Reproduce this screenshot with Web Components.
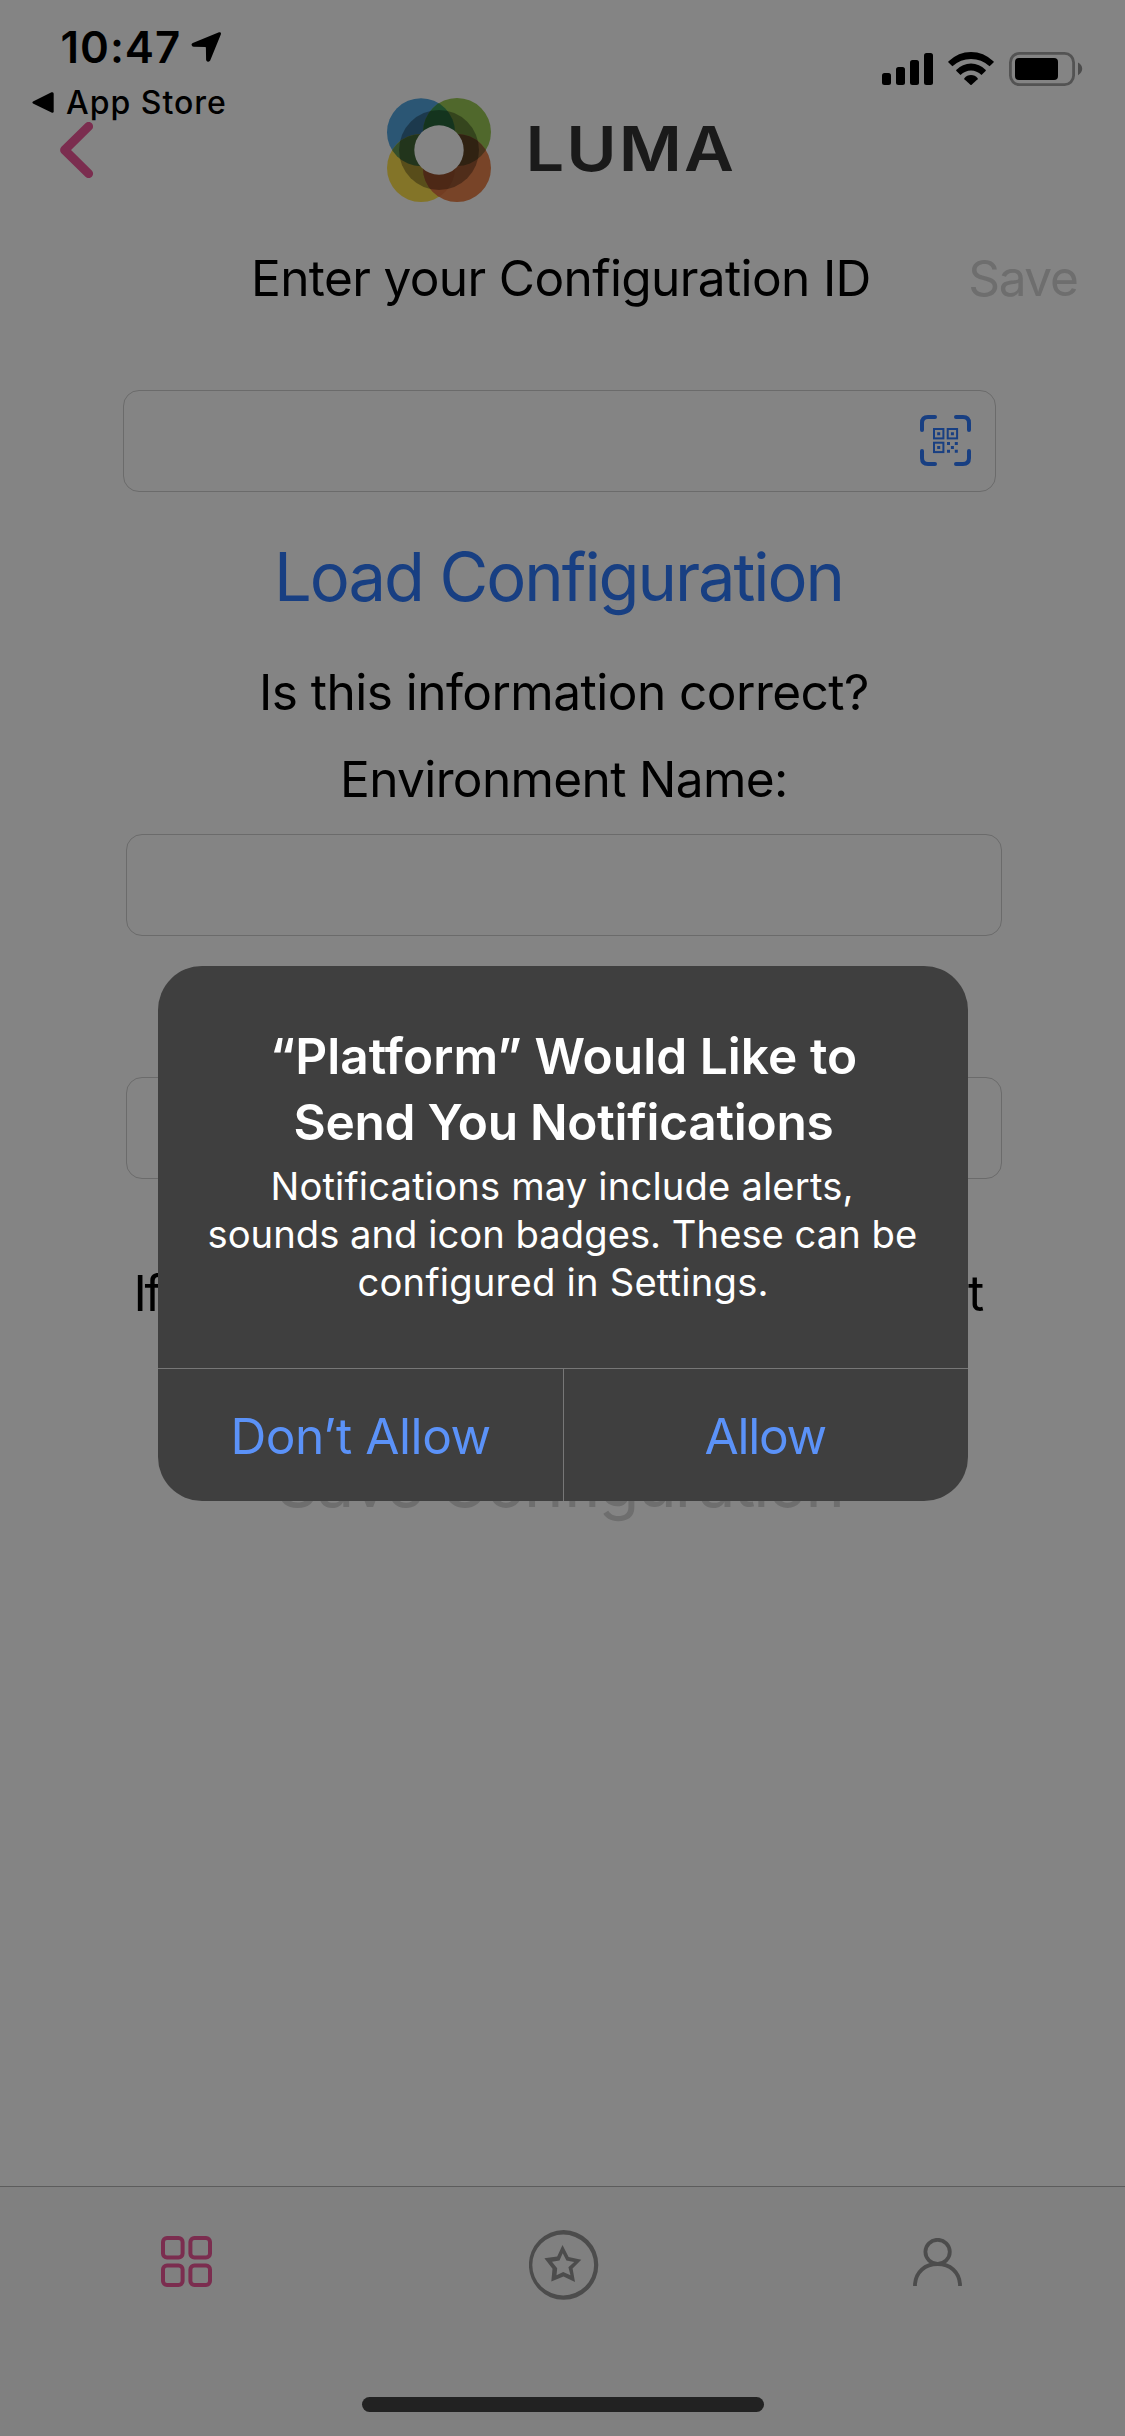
<!DOCTYPE html>
<html lang="en">
<head>
<meta charset="utf-8">
<title>Platform</title>
<style>
html,body{margin:0;background:#848484}
body{font-family:Inter,"Liberation Sans",sans-serif;color:#000}
</style>
</head>
<body>
<luma-app></luma-app>
<script>
const define = (name, html, ready) => {
  const t = document.createElement('template');
  t.innerHTML = html;
  customElements.define(name, class extends HTMLElement {
    constructor() { super(); this.attachShadow({mode: 'open'}).append(t.content.cloneNode(true)); }
    connectedCallback() { if (ready) ready.call(this); }
  });
};

/* A single line of text tracked so that its ink spans the width in the "w" attribute. */
const ctx = document.createElement('canvas').getContext('2d');
define('track-text', `<style>
  :host{display:block;white-space:nowrap;flex:none}
</style><slot></slot>`, function () {
  const size = +this.getAttribute('size'), w = +this.getAttribute('w');
  const weight = this.getAttribute('weight') || 400, text = this.textContent;
  ctx.font = `${weight} ${size}px Inter, "Liberation Sans", sans-serif`;
  const m = ctx.measureText(text);
  const ink = m.actualBoundingBoxLeft + m.actualBoundingBoxRight;
  const s = this.style;
  s.fontSize = size + 'px';
  s.fontWeight = weight;
  s.lineHeight = this.getAttribute('line') + 'px';
  s.width = w + 'px';
  s.textIndent = m.actualBoundingBoxLeft + 'px';
  if (text.length > 1) s.letterSpacing = (w - ink) / (text.length - 1) + 'px';
});

define('luma-mark', `<style>:host{display:block;flex:none}svg{display:block}</style>
<svg width="104" height="104" viewBox="387 98 104 104">
  <defs>
    <clipPath id="b"><circle cx="421" cy="132.2" r="34"/></clipPath>
    <clipPath id="y"><circle cx="421" cy="168" r="34"/></clipPath>
    <clipPath id="g"><circle cx="457" cy="132" r="34"/></clipPath>
  </defs>
  <circle cx="421" cy="132.2" r="34" fill="#2b5674"/>
  <circle cx="457" cy="132" r="34" fill="#50682c"/>
  <circle cx="421" cy="168" r="34" fill="#837428"/>
  <circle cx="457" cy="168" r="34" fill="#784428"/>
  <circle cx="457" cy="132" r="34" fill="#1f4e2e" clip-path="url(#b)"/>
  <circle cx="421" cy="168" r="34" fill="#344f2b" clip-path="url(#b)"/>
  <circle cx="457" cy="168" r="34" fill="#48331c" clip-path="url(#g)"/>
  <circle cx="457" cy="168" r="34" fill="#733d22" clip-path="url(#y)"/>
  <circle cx="439" cy="150" r="40" fill="#000" fill-opacity=".33"/>
  <circle cx="439" cy="150" r="24.7" fill="#848484"/>
</svg>`);

define('status-icons', `<style>:host{display:block}svg{display:block}</style>
<svg width="202" height="36" viewBox="881 51 202 36">
  <rect x="882" y="73" width="9" height="12" rx="2.5"/><rect x="896" y="67" width="9" height="18" rx="2.5"/>
  <rect x="910" y="60" width="9" height="25" rx="2.5"/><rect x="924" y="53" width="9" height="32" rx="2.5"/>
  <path d="M948.3 61.4Q958.5 52 971 52T993.7 61.4Q994 62 993.5 62.6L989.6 66.3Q981.5 59 971 59T952.4 66.3L948.5 62.6Q948 62 948.3 61.4Z"/>
  <path d="M956.2 70Q962.6 63.5 971 63.5T985.8 70Q986 70.6 985.6 71.1L981.5 75Q976.8 70.5 971 70.5T960.5 75L956.4 71.1Q956 70.6 956.2 70Z"/>
  <path d="M964.3 78.2Q967 75 971 75T977.7 78.2Q978 78.7 977.6 79.2L971.6 84.8Q971 85.2 970.4 84.8L964.4 79.2Q964 78.7 964.3 78.2Z"/>
  <rect x="1010.4" y="53.4" width="63.2" height="31.2" rx="9" fill="none" stroke="#535353" stroke-width="2.8"/>
  <rect x="1015" y="58" width="43" height="22" rx="4"/>
  <path d="M1078 62.5Q1082.2 65 1082.2 68.8T1078 75.2Z" fill="#4c4c4c"/>
</svg>`);

define('app-header', `<style>
  :host{display:flex;height:248px;flex:none}
  .left{width:387px;padding-top:21px;box-sizing:border-box;flex:none}
  .row{display:flex;align-items:flex-start}
  .time{padding-left:62.5px;gap:12px;height:52px}
  .time track-text{margin-top:.6px}
  .time svg{margin-top:11px}
  .back{padding-left:32px;gap:12px;margin-top:9px;height:40px}
  .back svg{margin-top:10px}
  .back track-text{margin-top:1px}
  svg{display:block;flex:none}
  .chev{margin-left:60px}
  .brand{display:flex;align-items:flex-start;gap:38.7px;margin-top:98px;width:494px;flex:none}
  .brand track-text{margin-top:16.3px;color:#1a1a1a;transform:scaleX(1.1);transform-origin:0 0}
  status-icons{margin-top:51px}
</style>
<div class="left">
  <div class="row time"><track-text size="43.8" weight="600" line="52" w="116.5">10:47</track-text>
    <svg width="30" height="31" viewBox="190 32 30 31"><path d="M218 32.3Q220.6 31.8 219.8 34.6L209.2 60.6Q208.5 62 206.8 61.7Q205.2 61.4 205.1 59.7L204.9 47.6Q204.9 46.9 204.1 46.9L192.6 46.7Q190.9 46.6 190.6 45.1Q190.3 43.6 191.8 42.9Z"/></svg>
  </div>
  <div class="row back">
    <svg width="22" height="22" viewBox="32 92 22 22"><path d="M33 101.6L51.5 92.3Q53.7 91.6 53.7 93.8V111.2Q53.7 113.4 51.5 112.6L33 103.6Q31.8 102.6 33 101.6Z"/></svg>
    <track-text size="32" weight="500" line="40" w="159">App Store</track-text>
  </div>
  <svg class="chev" width="34" height="56" viewBox="60 122 34 56"><path d="M88.6 126.4L64.6 150L88.6 173.6" fill="none" stroke="#7b2d4f" stroke-width="9" stroke-linecap="round" stroke-linejoin="round"/></svg>
</div>
<div class="brand"><luma-mark></luma-mark><track-text size="62.3" weight="560" line="70" w="183.9">LUMA</track-text></div>
<status-icons></status-icons>`);

define('text-field', `<style>
  :host{display:flex;align-items:center;justify-content:flex-end;box-sizing:border-box;height:102px;flex:none;
    border:1px solid #6b6b6b;border-radius:16px;padding-right:24px}
</style><slot></slot>`);

define('qr-icon', `<style>:host{display:block}svg{display:block}</style>
<svg width="51" height="51" viewBox="0 0 51 51" fill="none" stroke="#183f82">
  <g stroke-width="4" stroke-linecap="round"><path d="M2 15V8Q2 2 8 2H15M36 2H43Q49 2 49 8V15M49 36V43Q49 49 43 49H36M15 49H8Q2 49 2 43V36"/></g>
  <g stroke-width="2"><rect x="14" y="14" width="9.4" height="9.4"/><rect x="27.7" y="14" width="9.4" height="9.4"/><rect x="14" y="27.7" width="9.4" height="9.4"/></g>
  <g fill="#183f82" stroke="none"><path d="M17.2 17.2h3v3h-3zM30.9 17.2h3v3h-3zM17.2 30.9h3v3h-3zM27 27h3v3h-3zM34.8 27h3v3h-3zM30.9 30.9h3v3h-3zM27 34.8h3v3h-3zM34.8 34.8h3v3h-3z"/></g>
</svg>`);

define('config-form', `<style>
  :host{display:flex;flex-direction:column;flex:1}
  .title{display:flex;padding-left:255px;gap:101.6px}
  .off{color:#6e6e6e}
  .load{margin:45px 0 0 279px;color:#183f82}
  .id{width:873px;margin:82px 0 0 123px;padding-bottom:1px}
  .field{width:876px;margin-left:126px}
  .hint{display:flex;justify-content:space-between;padding-left:137.5px;width:846.5px;margin-top:84px}
</style>
<div class="title"><track-text size="49.6" line="60" w="613.6">Enter your Configuration ID</track-text><track-text class="off" size="49.6" line="60" w="106.7">Save</track-text></div>
<text-field class="id"><qr-icon></qr-icon></text-field>
<track-text class="load" size="66.8" line="80" w="561.5">Load Configuration</track-text>
<track-text style="margin:45px 0 0 263px" size="49.6" line="60" w="604">Is this information correct?</track-text>
<track-text style="margin:27px 0 0 344px" size="49.6" line="60" w="441">Environment Name:</track-text>
<text-field class="field" style="margin-top:25px"></text-field>
<text-field class="field" style="margin-top:141px"></text-field>
<div class="hint"><track-text size="49.6" line="60" w="25">If</track-text><track-text size="49.6" line="60" w="16">t</track-text></div>
<track-text class="off" style="margin:120px 0 0 279px" size="66.8" line="80" w="561.5">Save Configuration</track-text>`);

define('tab-bar', `<style>
  :host{display:flex;flex-direction:column;align-items:center;justify-content:space-between;flex:none;box-sizing:border-box;height:250px;
    border-top:1px solid #5c5c5c;background:#808080;padding:42px 0 24px}
  .tabs{display:flex;align-items:flex-start;justify-content:space-between;width:802px;margin-right:1px}
  svg{display:block}
  .home{width:402px;height:15px;border-radius:8px;background:#222}
</style>
<div class="tabs">
  <svg style="margin-top:7px" width="51" height="51" viewBox="0 0 51 51" fill="none" stroke="#7b2d4f" stroke-width="4"><rect x="2" y="2" width="19.6" height="19.6" rx="4"/><rect x="29.4" y="2" width="19.6" height="19.6" rx="4"/><rect x="2" y="29.4" width="19.6" height="19.6" rx="4"/><rect x="29.4" y="29.4" width="19.6" height="19.6" rx="4"/></svg>
  <svg style="margin:1px 0 0 2px" width="70" height="70" viewBox="0 0 70 70" fill="#4c4c4c"><path fill-rule="evenodd" d="M34.6 0A34.6 34.8 0 1 1 34.6 69.8A34.6 34.8 0 1 1 34.6 0ZM34.2 4.6A30.9 30.4 0 1 0 34.2 65.4A30.9 30.4 0 1 0 34.2 4.6Z"/><path fill-rule="evenodd" d="M33.5 15L39.6 27L52.3 29.8L43.6 38.6L46 52L34.5 46.5L22.3 51.5L23.5 38.8L15.4 28.3L28.2 26.6ZM33.7 23.3L30.5 30.6L23 31.7L28.2 38.3L27.5 45.2L34.2 42L41.5 45.2L39.4 37.2L45.2 31.9L37.4 30.4Z"/></svg>
  <svg style="margin-top:9px" width="50" height="49" viewBox="0 0 50 49" fill="none" stroke="#4c4c4c" stroke-width="3.8"><ellipse cx="24.6" cy="13.8" rx="12.2" ry="12"/><path d="M2 48V46C3 34 12 26 24.6 26S46 34 47 46V48"/></svg>
</div>
<div class="home"></div>`);

define('permission-alert', `<style>
  :host{position:absolute;left:158px;top:966px;width:810px;height:535px;border-radius:44px;background:#3f3f3f;color:#fff;display:flex;flex-direction:column;overflow:hidden}
  .copy{height:402px;box-sizing:border-box;padding-top:57px;flex:none;display:flex;flex-direction:column;align-items:flex-start}
  .actions{display:flex;flex:1;border-top:1px solid #777;color:#5b92f8}
  .actions div{flex:1;padding-top:37px}
  .actions div+div{border-left:1px solid #777}
</style>
<div class="copy">
  <track-text style="margin-left:115px" size="49.6" weight="600" line="66" w="583">“Platform” Would Like to</track-text>
  <track-text style="margin-left:137.5px" size="49.6" weight="600" line="66" w="537">Send You Notifications</track-text>
  <track-text style="margin:7px 0 0 115.5px" size="38.2" line="48" w="577">Notifications may include alerts,</track-text>
  <track-text style="margin-left:51.5px" size="38.2" line="48" w="706.5">sounds and icon badges. These can be</track-text>
  <track-text style="margin-left:200.5px" size="38.2" line="48" w="408">configured in Settings.</track-text>
</div>
<div class="actions">
  <div><track-text style="margin-left:76.5px" size="49.6" line="60" w="255">Don’t Allow</track-text></div>
  <div><track-text style="margin-left:142px" size="49.6" line="60" w="120">Allow</track-text></div>
</div>`);

define('luma-app', `<style>
  :host{display:flex;flex-direction:column;position:relative;width:1125px;height:2436px;background:#848484;overflow:hidden}
</style>
<app-header></app-header><config-form></config-form><tab-bar></tab-bar><permission-alert></permission-alert>`);
</script>
</body>
</html>
